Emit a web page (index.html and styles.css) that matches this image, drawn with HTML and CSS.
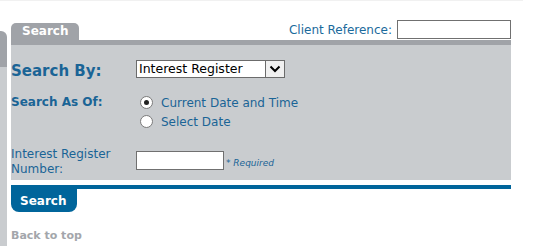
FILE: index.html
```html
<!DOCTYPE html>
<html>
<head>
<meta charset="utf-8">
<link rel="stylesheet" href="styles.css">
</head>
<body>
<div class="topline"></div>
<div class="page">
  <div class="side"><div class="side-tab"></div><div class="side-body"></div></div>
  <div class="main">
    <div class="tabrow">
      <div class="tab">Search</div>
      <div class="clientref">
        <label class="clientlabel">Client Reference:</label>
        <input class="clientinput" type="text">
      </div>
    </div>
    <div class="bar"></div>
    <div class="panel">
      <div class="lbl big">Search By:</div>
      <div class="ctl">
        <div class="select">
          <span class="select-text">Interest Register</span>
          <span class="select-btn"><svg width="12" height="8" viewBox="0 0 12 8"><path d="M1.5 1.5 L6 6 L10.5 1.5" fill="none" stroke="#000" stroke-width="2"/></svg></span>
        </div>
      </div>
      <div class="lbl bold asof">Search As Of:</div>
      <div class="ctl radios">
        <div class="radio-row"><span class="radio checked"></span><span class="rlabel">Current Date and Time</span></div>
        <div class="radio-row"><span class="radio"></span><span class="rlabel">Select Date</span></div>
      </div>
      <div class="lbl plain irn">Interest Register<br>Number:</div>
      <div class="ctl irn-ctl">
        <input class="irn-input" type="text"><span class="req">* Required</span>
      </div>
    </div>
    <div class="gap"></div>
    <div class="bluebar"></div>
    <div class="btn">Search</div>
    <div class="backtop">Back to top</div>
  </div>
</div>
</body>
</html>
```
FILE: styles.css
```css
html, body { margin: 0; padding: 0; background: #fff; }
body { font-family: "DejaVu Sans", Verdana, sans-serif; width: 541px; height: 246px; overflow: hidden; position: relative; }
.topline { position: absolute; left: 0; top: 0; width: 523px; height: 1px; background: #f1f1f1; }
.page { display: flex; }
.side { width: 7px; margin-top: 31px; display: flex; flex-direction: column; height: 215px; }
.side-tab { height: 36px; background: #a0a3a8; border-top-right-radius: 6px; }
.side-body { flex: 1; background: #c9cccf; }
.main { margin-left: 4px; width: 500px; display: flex; flex-direction: column; }
.tabrow { display: flex; justify-content: space-between; align-items: flex-end; height: 40px; }
.tab { width: 68px; height: 17px; background: #a0a3a8; color: #fff; font-weight: bold; font-size: 12px; line-height: 17px; text-indent: 11px; border-top-left-radius: 5px; border-top-right-radius: 5px; box-sizing: border-box; }
.clientref { display: flex; align-items: center; margin-bottom: 1px; }
.clientlabel { color: #1b6a9c; font-size: 12px; margin-right: 5px; }
.clientinput { width: 114px; height: 19px; box-sizing: border-box; border: 1px solid #707070; margin: 0; padding: 0; }
.bar { height: 5px; background: #a0a3a8; }
.panel { background: #c9cccf; height: 135px; display: grid; grid-template-columns: 125px 1fr; grid-template-rows: 45px 50px auto; align-content: start; }
.lbl { color: #1a6496; }
.big { font-size: 15px; font-weight: bold; padding-top: 17px; }
.bold { font-size: 12px; font-weight: bold; }
.asof { padding-top: 5px; }
.plain { font-size: 12px; line-height: 15px; padding-top: 7px; }
.ctl { display: flex; }
.select { margin-top: 15px; width: 149px; height: 18px; box-sizing: border-box; border: 1px solid #6b6b6b; background: #fff; display: flex; align-items: stretch; }
.select-text { flex: 1; font-size: 12.5px; line-height: 16px; padding-left: 2px; color: #000; }
.select-btn { width: 18px; border-left: 1px solid #6b6b6b; background: #f0f0f0; display: flex; align-items: center; justify-content: center; }
.radios { flex-direction: column; padding-top: 3px; }
.radio-row { display: flex; align-items: center; height: 19px; }
.radio { width: 11px; height: 11px; border: 1px solid #7a7a7a; border-radius: 50%; background: #fff; margin-left: 4px; margin-right: 8px; position: relative; }
.radio.checked::after { content: ""; position: absolute; left: 3px; top: 3px; width: 5px; height: 5px; border-radius: 50%; background: #222; }
.rlabel { color: #1a6496; font-size: 12px; }
.irn-ctl { align-items: flex-end; align-self: start; padding-top: 11px; }
.irn-input { width: 88px; height: 19px; box-sizing: border-box; border: 1px solid #707070; margin: 0; padding: 0; }
.req { font-size: 9px; font-style: italic; color: #1a6496; margin-left: 2px; margin-bottom: 2px; }
.gap { height: 5px; }
.bluebar { height: 4px; background: #00659b; }
.btn { width: 66px; height: 22px; padding-top: 1px; background: #00659b; color: #fff; font-weight: bold; font-size: 12px; line-height: 23px; text-indent: 9px; border-bottom-left-radius: 8px; border-bottom-right-radius: 8px; }
.backtop { margin-top: 17px; color: #a3a6ab; font-weight: bold; font-size: 11px; }
```
